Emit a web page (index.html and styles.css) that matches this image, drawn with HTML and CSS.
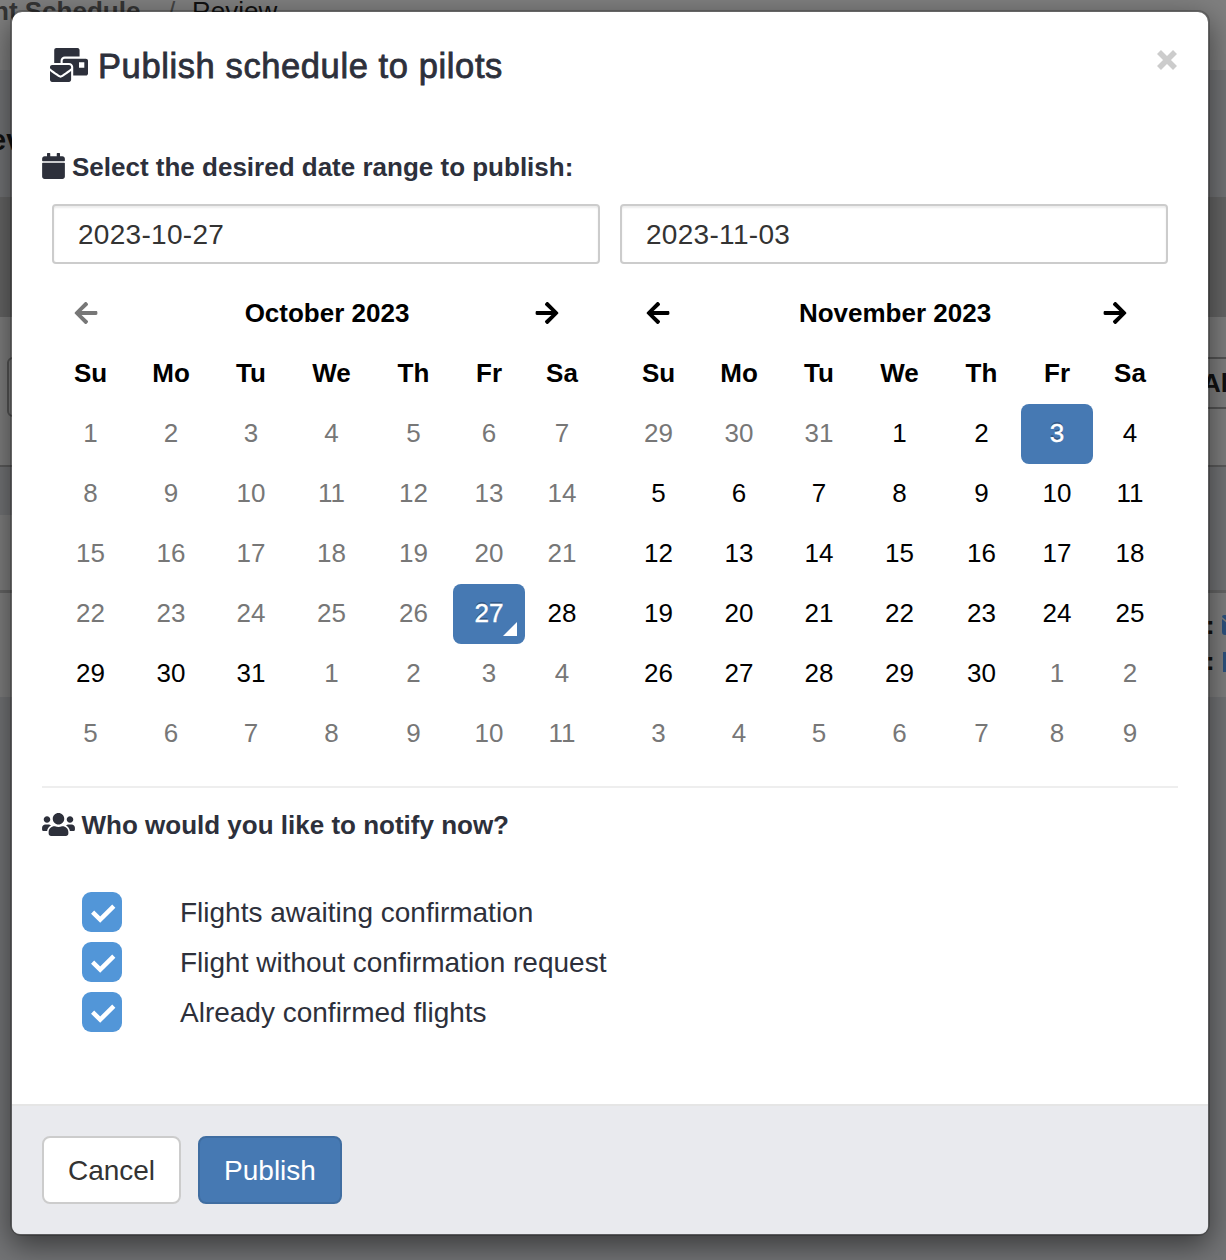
FILE: index.html
```html
<!DOCTYPE html>
<html lang="en">
<head>
<meta charset="utf-8">
<title>Publish schedule to pilots</title>
<link rel="stylesheet" href="styles.css">
</head>
<body>
<svg class="defs" aria-hidden="true">
  <symbol id="arrow-right" viewBox="0 0 448 512"><path d="M190.5 66.9l22.2-22.2c9.4-9.4 24.6-9.4 33.9 0L441 239c9.4 9.4 9.4 24.6 0 33.9L246.6 467.3c-9.4 9.4-24.6 9.4-33.9 0l-22.200-22.200c-9.500-9.500-9.300-25 .4-34.300L311.400 296H24c-13.300 0-24-10.700-24-24v-32c0-13.300 10.700-24 24-24h287.400L190.900 101.200c-9.800-9.300-10-24.800-.4-34.300z"/></symbol>
  <symbol id="check" viewBox="0 0 40 40"><path d="M10.600 20.200l7.600 7.400L31.800 14.200" fill="none" stroke="#fff" stroke-width="4.500"/></symbol>
</svg>
<div class="page" aria-hidden="true">
  <div class="crumbs"><b>nt Schedule</b><span class="slash">/</span><span>Review</span></div>
  <div class="heading">ev</div>
  <div class="toolbar"></div>
  <div class="filters"><div class="filter"></div><div class="all">All</div></div>
  <div class="gap"><div class="gap-left"></div></div>
  <div class="rows"><span class="colons">:<br>:</span><svg class="mail" viewBox="0 0 20 20"><path d="M0 4l10 8L20 4v13a3 3 0 0 1-3 3H3a3 3 0 0 1-3-3zM0 2a2 2 0 0 1 2-2h16a2 2 0 0 1 2 2l-10 8z"/></svg><span class="flag"></span></div>
</div>
<div class="backdrop"></div>
<main class="modal">
  <header class="modal-header">
    <svg class="bulk" viewBox="0 0 576 512"><path d="M160 448c-25.600 0-51.200-22.400-64-32-64-44.800-83.200-60.800-96-70.400V480c0 17.670 14.330 32 32 32h256c17.670 0 32-14.330 32-32V345.600c-12.800 9.600-32 25.600-96 70.400-12.800 9.600-38.400 32-64 32zm128-192H32c-17.670 0-32 14.330-32 32v16c25.600 19.200 22.400 19.200 115.200 86.400 9.600 6.400 28.800 25.600 44.800 25.600s35.200-19.200 44.800-25.600c92.800-67.200 89.600-67.200 115.200-86.400V288c0-17.670-14.330-32-32-32zm256-96H224c-17.670 0-32 14.330-32 32v32h96c33.210 0 60.590 25.420 63.710 57.820l.29-.22V416h192c17.670 0 32-14.330 32-32V192c0-17.670-14.330-32-32-32zm-24 136h-80v-80h80v80zm-360-104c0-35.290 28.710-64 64-64h224V32c0-17.670-14.330-32-32-32H96C78.330 0 64 14.330 64 32v192h96v-32z"/></svg>
    <h1>Publish schedule to pilots</h1>
    <svg class="close" viewBox="0 0 22 22"><path d="M3 3l16 16M19 3L3 19" stroke="#ccc" stroke-width="5.600"/></svg>
  </header>
  <section class="dates">
    <h2 class="label"><svg class="cal-icon" viewBox="0 0 448 512"><path d="M12 192h424c6.600 0 12 5.400 12 12v260c0 26.500-21.500 48-48 48H48c-26.500 0-48-21.500-48-48V204c0-6.600 5.400-12 12-12zm436-44v-36c0-26.500-21.500-48-48-48h-48V12c0-6.600-5.400-12-12-12h-40c-6.600 0-12 5.400-12 12v52H160V12c0-6.600-5.400-12-12-12h-40c-6.600 0-12 5.400-12 12v52H48C21.500 64 0 85.500 0 112v36c0 6.600 5.400 12 12 12h424c6.600 0 12-5.400 12-12z"/></svg><span class="label-text">Select the desired date range to publish:</span></h2>
    <div class="pickers">
      <div class="picker">
        <div class="field">2023-10-27</div>
        <div class="month"><svg class="arrow prev off"><use href="#arrow-right"/></svg><b>October 2023</b><svg class="arrow"><use href="#arrow-right"/></svg></div>
        <div class="grid">
          <b>Su</b><b>Mo</b><b>Tu</b><b>We</b><b>Th</b><b>Fr</b><b>Sa</b>
          <i>1</i><i>2</i><i>3</i><i>4</i><i>5</i><i>6</i><i>7</i>
          <i>8</i><i>9</i><i>10</i><i>11</i><i>12</i><i>13</i><i>14</i>
          <i>15</i><i>16</i><i>17</i><i>18</i><i>19</i><i>20</i><i>21</i>
          <i>22</i><i>23</i><i>24</i><i>25</i><i>26</i><span class="active today">27</span><span>28</span>
          <span>29</span><span>30</span><span>31</span><i>1</i><i>2</i><i>3</i><i>4</i>
          <i>5</i><i>6</i><i>7</i><i>8</i><i>9</i><i>10</i><i>11</i>
        </div>
      </div>
      <div class="picker">
        <div class="field">2023-11-03</div>
        <div class="month nov"><svg class="arrow prev"><use href="#arrow-right"/></svg><b>November 2023</b><svg class="arrow"><use href="#arrow-right"/></svg></div>
        <div class="grid">
          <b>Su</b><b>Mo</b><b>Tu</b><b>We</b><b>Th</b><b>Fr</b><b>Sa</b>
          <i>29</i><i>30</i><i>31</i><span>1</span><span>2</span><span class="active">3</span><span>4</span>
          <span>5</span><span>6</span><span>7</span><span>8</span><span>9</span><span>10</span><span>11</span>
          <span>12</span><span>13</span><span>14</span><span>15</span><span>16</span><span>17</span><span>18</span>
          <span>19</span><span>20</span><span>21</span><span>22</span><span>23</span><span>24</span><span>25</span>
          <span>26</span><span>27</span><span>28</span><span>29</span><span>30</span><i>1</i><i>2</i>
          <i>3</i><i>4</i><i>5</i><i>6</i><i>7</i><i>8</i><i>9</i>
        </div>
      </div>
    </div>
  </section>
  <section class="notify">
    <h2 class="label"><svg class="users" viewBox="0 32 640 448"><path d="M96 224c35.300 0 64-28.700 64-64s-28.700-64-64-64-64 28.700-64 64 28.700 64 64 64zm448 0c35.300 0 64-28.700 64-64s-28.700-64-64-64-64 28.700-64 64 28.700 64 64 64zm32 32h-64c-17.600 0-33.500 7.100-45.100 18.600 40.300 22.100 68.900 62 75.100 109.400h66c17.700 0 32-14.300 32-32v-32c0-35.300-28.700-64-64-64zm-256 0c61.900 0 112-50.100 112-112S381.900 32 320 32 208 82.100 208 144s50.100 112 112 112zm76.800 32h-8.300c-20.800 10-43.900 16-68.500 16s-47.600-6-68.500-16h-8.300C179.600 288 128 339.600 128 403.200V432c0 26.500 21.500 48 48 48h288c26.500 0 48-21.500 48-48v-28.800c0-63.600-51.600-115.200-115.200-115.200zm-223.700-13.400C161.500 263.100 145.600 256 128 256H64c-35.300 0-64 28.700-64 64v32c0 17.700 14.300 32 32 32h65.900c6.300-47.400 34.900-87.300 75.200-109.400z"/></svg><span class="label-text">Who would you like to notify now?</span></h2>
    <div class="checks">
      <label><svg class="box"><use href="#check"/></svg><span>Flights awaiting confirmation</span></label>
      <label><svg class="box"><use href="#check"/></svg><span>Flight without confirmation request</span></label>
      <label><svg class="box"><use href="#check"/></svg><span>Already confirmed flights</span></label>
    </div>
  </section>
  <footer class="modal-footer">
    <button class="btn cancel">Cancel</button>
    <button class="btn publish">Publish</button>
  </footer>
</main>
</body>
</html>
```
FILE: styles.css
```css
* { box-sizing: border-box; }
body { margin: 0; height: 1260px; overflow: hidden; position: relative; font-family: "Liberation Sans", Arial, sans-serif; font-size: 26px; color: #2d303b; }
.defs { display: none; }
svg { fill: currentColor; display: block; flex: none; }

/* Page behind the dialog */
.page { height: 1260px; background: #e7e8ed; color: #222; overflow: hidden; }
.crumbs { height: 70px; background: #fff; display: flex; line-height: 30px; }
.crumbs b { color: #6a6a6a; width: 175px; margin-top: -4px; margin-left: -7px; }
.crumbs span { margin-top: -4px; }
.crumbs .slash { width: 24px; color: #888; }
.heading { height: 127px; padding-top: 52px; margin-left: -10px; font-size: 29px; font-weight: bold; line-height: 36px; }
.toolbar { height: 120px; background: #ccc; }
.filters { height: 150px; background: #fff; display: flex; justify-content: space-between; padding-top: 40px; border-bottom: 2px solid #b8b8b8; }
.filter { margin-left: 7px; width: 300px; height: 60px; border: 2px solid #aaa; border-radius: 6px; }
.all { width: 24px; height: 52px; border: solid #aaa; border-width: 2px 0; font-weight: bold; line-height: 48px; }
.gap { height: 126px; padding-top: 48px; border-bottom: 3px solid #ccc; }
.gap-left { width: 613px; height: 75px; background: #fff; }
.rows { height: 104px; background: #fff; position: relative; font-weight: bold; line-height: 36px; }
.colons { position: absolute; left: 1206px; top: 14px; }
.mail, .flag { position: absolute; left: 1222px; top: 22px; width: 20px; height: 20px; color: #5ba5ff; }
.flag { left: 1223px; top: 59px; background: #5ba5ff; }
.backdrop { position: absolute; inset: 0; background: rgba(0,0,0,.5); }

/* Dialog */
.modal { position: absolute; left: 10px; top: 10px; width: 1200px; height: 1226px; display: flex; flex-direction: column; background: #fff; background-clip: padding-box; border: 2px solid rgba(0,0,0,.2); border-radius: 12px; box-shadow: 0 10px 30px rgba(0,0,0,.5); }
.modal-header { height: 140px; padding: 36px 30px 0 38px; display: flex; align-items: flex-start; }
.bulk { width: 38px; height: 34px; }
h1 { margin: -2px 0 0 10px; font-size: 34.5px; line-height: 40px; font-weight: normal; letter-spacing: .6px; -webkit-text-stroke: .8px currentColor; white-space: nowrap; flex: 1; }
.close { width: 22px; height: 22px; margin-top: 1px; }
.label { margin: 0; font-size: 26px; line-height: 30px; display: flex; align-items: center; white-space: nowrap; }
.dates { margin: 0 30px; height: 636px; border-bottom: 2px solid #eee; }
.cal-icon { width: 23px; height: 26px; margin: -2px 7px 0 0; }
.pickers { display: flex; gap: 20px; padding: 22px 10px 0; }
.picker { width: 548px; }
.field { height: 60px; border: 2px solid #ccc; border-radius: 4px; box-shadow: inset 0 2px 2px rgba(0,0,0,.075); padding-left: 24px; font-size: 28px; line-height: 57px; color: #333; letter-spacing: .3px; }
.month { height: 60px; margin-top: 20px; padding: 0 41px 0 22px; display: grid; grid-template-columns: 24px 1fr 24px; align-items: center; color: #000; }
.month b { text-align: center; margin-top: -2px; padding-left: 21px; }
.month.nov { padding-left: 26px; }
.month.nov b { padding-left: 17px; }
.arrow { width: 24px; height: 26px; margin-top: -3px; }
.prev { transform: scaleX(-1); }
.off { color: #777; }
.grid { display: grid; grid-template-columns: 77px 84px 76px 85px 79px 72px 74px; grid-auto-rows: 60px; color: #000; text-align: center; line-height: 59px; }
.grid i { font-style: normal; color: #777; }
.active { position: relative; background: #4679b3; color: #fff; border-radius: 8px; text-shadow: 0 -2px 0 rgba(0,0,0,.25); -webkit-text-stroke: .4px #fff; }
.today::after { content: ""; position: absolute; right: 8px; bottom: 8px; border: solid transparent; border-width: 0 0 14px 14px; border-bottom-color: #fff; }
.notify { flex: 1; padding: 22px 30px 0; }
.users { width: 33px; height: 23px; margin: -2px 6.5px 0 0; }
.checks { padding: 52px 0 0 40px; display: flex; flex-direction: column; gap: 10px; }
.checks label { display: flex; align-items: center; gap: 58px; height: 40px; font-size: 28px; white-space: nowrap; }
.checks span { margin-top: 2px; }
.box { width: 40px; height: 40px; border-radius: 9px; background: #5296d8; }
.modal-footer { height: 130px; padding: 30px; display: flex; gap: 17px; background: #e9eaee; border-top: 2px solid #e5e5e5; border-radius: 0 0 8px 8px; }
.btn { height: 68px; padding: 2px 0 0; border: 2px solid #ccc; border-radius: 8px; background: #fff; color: #333; font: 28px "Liberation Sans", Arial, sans-serif; }
.cancel { width: 139px; }
.publish { width: 144px; background: #4679b3; border-color: #3f6da1; color: #fff; }
```
